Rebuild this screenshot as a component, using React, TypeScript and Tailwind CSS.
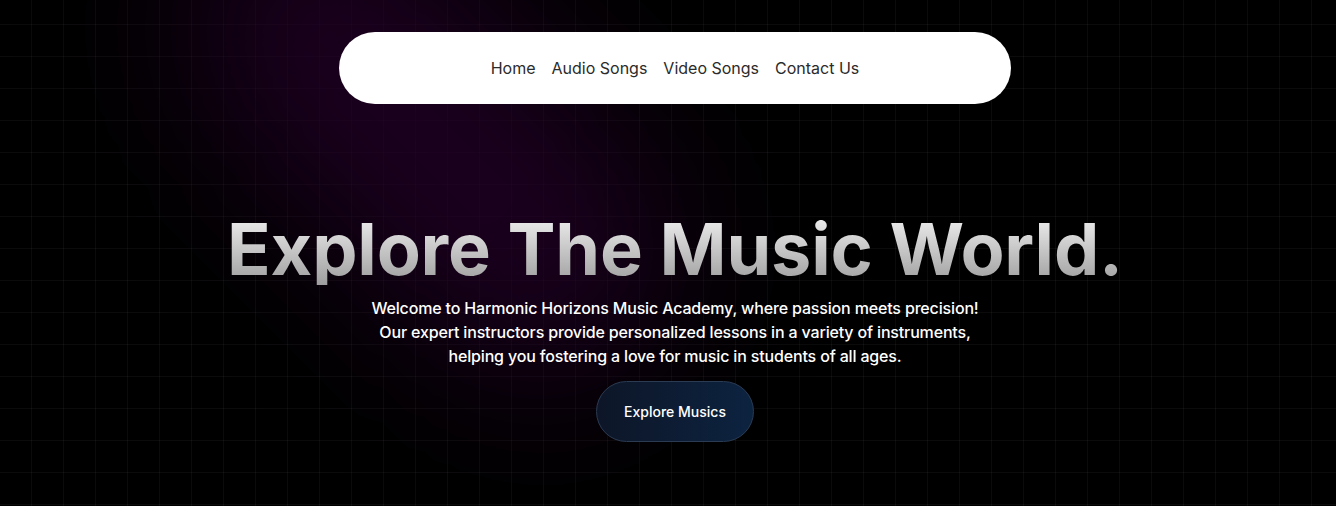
import React from 'react'

const links = ['Home', 'Audio Songs', 'Video Songs', 'Contact Us']

export default function App() {
  return (
    <div
      className="relative min-h-[506px] w-full overflow-hidden bg-black font-['Inter',sans-serif]"
      style={{
        backgroundImage:
          'linear-gradient(to right, rgba(255,255,255,0.045) 1px, transparent 1px), linear-gradient(to bottom, rgba(255,255,255,0.045) 1px, transparent 1px)',
        backgroundSize: '32px 32px',
        backgroundPosition: '31px 24px',
      }}
    >
      {/* purple glow */}
      <div className="pointer-events-none absolute left-[300px] top-[-150px] h-[580px] w-[260px] -rotate-45 rounded-full bg-[#230028] opacity-80 blur-[80px]" />

      <div className="relative flex flex-col items-center pl-[14px] pt-8">
        <nav className="flex h-[72px] w-[672px] items-center justify-center gap-4 rounded-full bg-white">
          {links.map((l) => (
            <a key={l} href="#" className="text-base text-[#2b2b2b]">
              {l}
            </a>
          ))}
        </nav>

        <h1 className="mt-[109px] bg-gradient-to-b from-[#f2f2f2] to-[#9e9e9e] bg-clip-text text-[72px] font-bold leading-none tracking-[-0.2px] text-transparent">
          Explore The Music World.
        </h1>

        <p className="mt-[11px] text-center text-base font-medium leading-6 tracking-[-0.16px] text-white">
          Welcome to Harmonic Horizons Music Academy, where passion meets precision!
          <br />
          Our expert instructors provide personalized lessons in a variety of instruments,
          <br />
          helping you fostering a love for music in students of all ages.
        </p>

        <button className="mt-[13px] h-[61px] w-[158px] rounded-full border border-[#2a3b52] bg-gradient-to-r from-[#0d1628] to-[#0c2340] text-sm font-medium text-white">
          Explore Musics
        </button>
      </div>
    </div>
  )
}
